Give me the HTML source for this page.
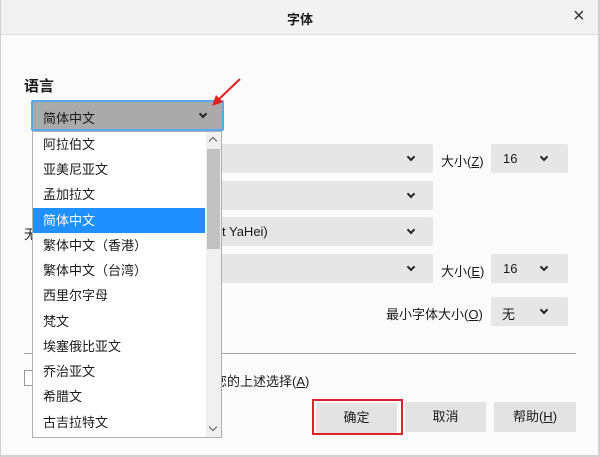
<!DOCTYPE html>
<html><head><meta charset="utf-8"><style>
*{box-sizing:border-box;margin:0;padding:0}
body{width:600px;height:457px;background:#fbfbfb;font-family:"Liberation Sans","Noto Sans CJK SC",sans-serif;font-size:13px;color:#1a1a1a;position:relative;overflow:hidden}
.a{position:absolute}
.sel{position:absolute;background:#e6e6e6;border-radius:2px}
.chev{position:absolute;width:6px;height:6px;border-right:2px solid #222;border-bottom:2px solid #222;transform:rotate(45deg)}
.btn{position:absolute;background:#e3e3e3;text-align:center;line-height:30px;height:30px}
u{text-decoration:underline}
.it{position:absolute;left:10px;height:25px;line-height:25px}
</style></head><body>
<div class="a" style="left:0;top:0;width:600px;height:35px;background:#f2f2f2;border-bottom:1px solid #dcdcdc"></div>
<div class="a" style="left:0;top:0;width:1px;height:457px;background:#d0d0d0"></div>
<div class="a" style="right:0;top:0;width:2px;height:457px;background:#d0d0d0"></div>
<div class="a" style="left:0;bottom:0;width:600px;height:2px;background:#d0d0d0"></div>
<div class="a" style="left:0;top:9px;width:600px;text-align:center;font-weight:bold;font-size:13px">字体</div>
<div class="a" style="left:573px;top:5px;font-size:20px;color:#333">×</div>
<div class="a" style="left:24px;top:75px;font-size:15px;font-weight:bold">语言</div>
<div class="a" style="left:24px;top:224px">无</div>
<div class="sel" style="left:200px;top:144px;width:233px;height:29px"><div class="chev" style="left:208px;top:10px"></div></div>
<div class="a" style="left:441px;top:151px">大小(<u>Z</u>)</div>
<div class="sel" style="left:491px;top:144px;width:77px;height:29px"><span class="a" style="left:12px;top:7px">16</span><div class="chev" style="left:50px;top:10px"></div></div>
<div class="sel" style="left:200px;top:181px;width:233px;height:29px"><div class="chev" style="left:208px;top:10px"></div></div>
<div class="sel" style="left:200px;top:217px;width:233px;height:29px"><span class="a" style="left:22px;top:7px">t YaHei)</span><div class="chev" style="left:208px;top:10px"></div></div>
<div class="sel" style="left:200px;top:254px;width:233px;height:29px"><div class="chev" style="left:208px;top:10px"></div></div>
<div class="a" style="left:441px;top:261px">大小(<u>E</u>)</div>
<div class="sel" style="left:491px;top:254px;width:77px;height:29px"><span class="a" style="left:12px;top:7px">16</span><div class="chev" style="left:50px;top:10px"></div></div>
<div class="a" style="left:386px;top:304px">最小字体大小(<u>O</u>)</div>
<div class="sel" style="left:491px;top:297px;width:77px;height:29px"><span class="a" style="left:11px;top:7px">无</span><div class="chev" style="left:50px;top:10px"></div></div>
<div class="a" style="left:24px;top:353px;width:552px;height:1px;background:#a0a0a0"></div>
<div class="a" style="left:24px;top:370px;width:10px;height:16px;border:1px solid #999;background:#fff"></div>
<div class="a" style="left:214px;top:371px">您的上述选择(<u>A</u>)</div>
<div class="a" style="left:312px;top:399px;width:91px;height:36px;border:2px solid #e0202a"></div>
<div class="btn" style="left:316px;top:403px;width:81px">确定</div>
<div class="btn" style="left:405px;top:402px;width:81px">取消</div>
<div class="btn" style="left:494px;top:402px;width:82px">帮助(<u>H</u>)</div>
<div class="a" style="left:31px;top:100px;width:193px;height:31px;border:2px solid #5aa6f0;background:#aaaaaa;border-radius:2px"><span class="a" style="left:10px;top:6px">简体中文</span><div class="chev" style="left:167px;top:9px"></div></div>
<div class="a" style="left:32px;top:131px;width:190px;height:307px;background:#fff;border:1px solid #b0b0b0">
<div class="a" style="left:173px;top:0;width:15px;height:305px;background:#f0f0f0"></div>
<div class="a" style="left:174px;top:17px;width:13px;height:100px;background:#c2c2c2"></div>
<div class="a" style="left:177px;top:6px;width:6px;height:6px;border-left:1.5px solid #555;border-top:1.5px solid #555;transform:rotate(45deg)"></div>
<div class="a" style="left:177px;top:292px;width:6px;height:6px;border-right:1.5px solid #555;border-bottom:1.5px solid #555;transform:rotate(45deg)"></div>
<div class="a" style="left:0;top:76px;width:172px;height:25px;background:#1e90ff"></div>
<div class="it" style="top:0">阿拉伯文</div>
<div class="it" style="top:25px">亚美尼亚文</div>
<div class="it" style="top:50px">孟加拉文</div>
<div class="it" style="top:76px;color:#fff">简体中文</div>
<div class="it" style="top:101px">繁体中文（香港）</div>
<div class="it" style="top:126px">繁体中文（台湾）</div>
<div class="it" style="top:151px">西里尔字母</div>
<div class="it" style="top:177px">梵文</div>
<div class="it" style="top:202px">埃塞俄比亚文</div>
<div class="it" style="top:227px">乔治亚文</div>
<div class="it" style="top:252px">希腊文</div>
<div class="it" style="top:278px">古吉拉特文</div>
</div>
<svg class="a" style="left:205px;top:75px" width="40" height="35"><line x1="35" y1="4" x2="12" y2="26" stroke="#e02020" stroke-width="2"/><polygon points="7,31 11,20 18,27" fill="#e02020"/></svg>
</body></html>
